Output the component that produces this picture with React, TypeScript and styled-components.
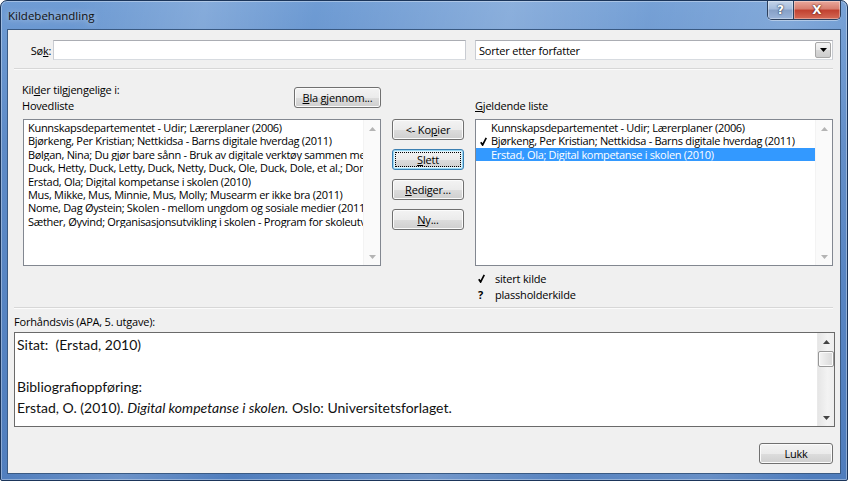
import React from "react";
import styled, { createGlobalStyle, css } from "styled-components";

const GlobalStyle = createGlobalStyle`
  html, body {
    margin: 0;
    padding: 0;
    background: #ffffff;
  }
  body {
    font-family: "Open Sans", "Noto Sans", sans-serif;
    font-size: 11px;
    color: #000000;
  }
`;

const mainSources = [
  "Kunnskapsdepartementet - Udir; Lærerplaner (2006)",
  "Bjørkeng, Per Kristian; Nettkidsa - Barns digitale hverdag (2011)",
  "Bølgan, Nina; Du gjør bare sånn - Bruk av digitale verktøy sammen med elever (2011)",
  "Duck, Hetty, Duck, Letty, Duck, Netty, Duck, Ole, Duck, Dole, et al.; Donald (2011)",
  "Erstad, Ola; Digital kompetanse i skolen (2010)",
  "Mus, Mikke, Mus, Minnie, Mus, Molly; Musearm er ikke bra (2011)",
  "Nome, Dag Øystein; Skolen - mellom ungdom og sosiale medier (2011)",
  "Sæther, Øyvind; Organisasjonsutvikling i skolen - Program for skoleutvikling (2009)",
];

const currentSources = [
  { text: "Kunnskapsdepartementet - Udir; Lærerplaner (2006)", cited: false, selected: false },
  { text: "Bjørkeng, Per Kristian; Nettkidsa - Barns digitale hverdag (2011)", cited: true, selected: false },
  { text: "Erstad, Ola; Digital kompetanse i skolen (2010)", cited: false, selected: true },
];

const Check = () => (
  <svg width="7" height="9" viewBox="0 0 7 9">
    <path d="M0.8 5.2 L2.6 8 L6.3 0.8" fill="none" stroke="#000" strokeWidth="1.7" />
  </svg>
);

const ArrowGlyph: React.FC<{ dir: "up" | "down"; color?: string }> = ({ dir, color = "#444" }) => (
  <svg width="7" height="4" viewBox="0 0 7 4">
    <polygon points={dir === "up" ? "0,4 3.5,0 7,4" : "0,0 7,0 3.5,4"} fill={color} />
  </svg>
);

const App: React.FC = () => {
  return (
    <>
      <GlobalStyle />
      <Window>
        <TitleBar>
          <TitleText>Kildebehandling</TitleText>
          <CaptionButtons>
            <CaptionButton kind="help">?</CaptionButton>
            <CaptionButton kind="close">X</CaptionButton>
          </CaptionButtons>
        </TitleBar>

        <Client>
          <SearchRow>
            <FieldLabel>
              Sø<Acc>k</Acc>:
            </FieldLabel>
            <TextInput />
            <Select>
              <span>Sorter etter forfatter</span>
              <DropButton>
                <ArrowGlyph dir="down" color="#000" />
              </DropButton>
            </Select>
          </SearchRow>

          <Separator />

          <SourcesGrid>
            <HeaderLeft>
              <HeaderText>
                <div>
                  Kil<Acc>d</Acc>er tilgjengelige i:
                </div>
                <div>Hovedliste</div>
              </HeaderText>
              <Button width={87} offset={5}>
                <span>
                  <Acc>B</Acc>la gjennom...
                </span>
              </Button>
            </HeaderLeft>
            <div />
            <HeaderRight>
              <Acc>G</Acc>jeldende liste
            </HeaderRight>

            <ListBox>
              <ListItems>
                {mainSources.map((s) => (
                  <ListItem key={s}>{s}</ListItem>
                ))}
              </ListItems>
              <ScrollBar>
                <ScrollArrow>
                  <ArrowGlyph dir="up" color="#b4b4b4" />
                </ScrollArrow>
                <ScrollArrow>
                  <ArrowGlyph dir="down" color="#b4b4b4" />
                </ScrollArrow>
              </ScrollBar>
            </ListBox>

            <ActionColumn>
              <Button width={72}>
                <span>
                  &lt;- Ko<Acc>p</Acc>ier
                </span>
              </Button>
              <Button width={72} focused>
                <FocusRect>
                  <span>
                    <Acc>S</Acc>lett
                  </span>
                </FocusRect>
              </Button>
              <Button width={72}>
                <span>
                  <Acc>R</Acc>ediger...
                </span>
              </Button>
              <Button width={72}>
                <span>
                  <Acc>N</Acc>y...
                </span>
              </Button>
            </ActionColumn>

            <ListBox>
              <ListItems>
                {currentSources.map((s) => (
                  <ListItem key={s.text} selected={s.selected} withMark>
                    <MarkSlot>{s.cited && <Check />}</MarkSlot>
                    <span>{s.text}</span>
                  </ListItem>
                ))}
              </ListItems>
              <ScrollBar>
                <ScrollArrow>
                  <ArrowGlyph dir="up" color="#b4b4b4" />
                </ScrollArrow>
                <ScrollArrow>
                  <ArrowGlyph dir="down" color="#b4b4b4" />
                </ScrollArrow>
              </ScrollBar>
            </ListBox>

            <div />
            <div />
            <Legend>
              <LegendRow>
                <LegendMark>
                  <Check />
                </LegendMark>
                <span>sitert kilde</span>
              </LegendRow>
              <LegendRow>
                <LegendMark>?</LegendMark>
                <span>plassholderkilde</span>
              </LegendRow>
            </Legend>
          </SourcesGrid>

          <Separator gap={5} />

          <PreviewLabel>Forhåndsvis (APA, 5. utgave):</PreviewLabel>
          <PreviewBox>
            <PreviewText>
              <PreviewLine>Sitat:&nbsp; (Erstad, 2010)</PreviewLine>
              <PreviewLine>&nbsp;</PreviewLine>
              <PreviewLine>Bibliografioppføring:</PreviewLine>
              <PreviewLine>
                Erstad, O. (2010). <em>Digital kompetanse i skolen.</em> Oslo: Universitetsforlaget.
              </PreviewLine>
            </PreviewText>
            <ScrollBar active>
              <ScrollArrow>
                <ArrowGlyph dir="up" />
              </ScrollArrow>
              <Thumb />
              <Spacer />
              <ScrollArrow>
                <ArrowGlyph dir="down" />
              </ScrollArrow>
            </ScrollBar>
          </PreviewBox>

          <Footer>
            <Button width={74}>
              <span>Lukk</span>
            </Button>
          </Footer>
        </Client>
      </Window>
    </>
  );
};

const Window = styled.div`
  width: 848px;
  height: 481px;
  box-sizing: border-box;
  display: flex;
  flex-direction: column;
  padding: 0 6px 6px 6px;
  border: 1px solid #1b355a;
  border-radius: 7px 7px 2px 2px;
  box-shadow: inset 0 0 0 1px rgba(255, 255, 255, 0.35);
  background:
    linear-gradient(
      100deg,
      rgba(255, 255, 255, 0) 8%,
      rgba(255, 255, 255, 0.16) 22%,
      rgba(255, 255, 255, 0) 34%,
      rgba(255, 255, 255, 0.2) 55%,
      rgba(255, 255, 255, 0.05) 70%,
      rgba(255, 255, 255, 0.14) 85%,
      rgba(255, 255, 255, 0) 96%
    ),
    linear-gradient(180deg, #6f9cd4 0%, #5e8bc7 30%, #4f7dbd 100%);
  overflow: hidden;
`;

const TitleBar = styled.div`
  height: 28px;
  display: flex;
  justify-content: space-between;
  align-items: flex-start;
  flex-shrink: 0;
`;

const TitleText = styled.div`
  padding: 7px 0 0 1px;
  font-size: 11.5px;
  line-height: 15px;
  color: #111111;
  text-shadow: 0 0 6px rgba(255, 255, 255, 0.7);
`;

const CaptionButtons = styled.div`
  display: flex;
  height: 18px;
  border: 1px solid #2c3f5c;
  border-top: none;
  border-radius: 0 0 5px 5px;
  overflow: hidden;
  box-shadow: 0 1px 0 rgba(255, 255, 255, 0.4);
`;

const CaptionButton = styled.div<{ kind: "help" | "close" }>`
  height: 18px;
  display: flex;
  align-items: center;
  justify-content: center;
  font-family: "DejaVu Sans", sans-serif;
  font-weight: bold;
  font-size: 12px;
  color: #ffffff;
  text-shadow: 0 0 2px #22334d, 0 0 1px #22334d;
  box-shadow: inset 0 0 0 1px rgba(255, 255, 255, 0.35);
  ${(p) =>
    p.kind === "help"
      ? css`
          width: 25px;
          border-right: 1px solid #2c3f5c;
          background: linear-gradient(#c3d3e8 0%, #a5bcdc 45%, #869fc6 50%, #9bb5da 100%);
        `
      : css`
          width: 46px;
          background: linear-gradient(#eaa89c 0%, #d77d6e 45%, #c1402f 50%, #d56a56 100%);
          text-shadow: 0 0 2px #5a1a12, 0 0 1px #5a1a12;
        `}
`;

const Client = styled.div`
  flex: 1;
  display: flex;
  flex-direction: column;
  padding: 0 5px 0 6px;
  background: #f0f0f0;
  border: 1px solid #3a5a83;
`;

const SearchRow = styled.div`
  display: grid;
  grid-template-columns: 39px 413px 367px;
  align-items: center;
  margin-top: 10px;
  height: 20px;
`;

const FieldLabel = styled.label`
  text-align: right;
  padding-right: 2px;
  white-space: nowrap;
  letter-spacing: -0.3px;
`;

const Acc = styled.span`
  text-decoration: underline;
`;

const TextInput = styled.div`
  height: 20px;
  box-sizing: border-box;
  background: #ffffff;
  border: 1px solid #abadb3;
  border-color: #abadb3 #c9ccd2 #d7dbe0 #c9ccd2;
`;

const Select = styled.div`
  height: 20px;
  margin-left: 9px;
  box-sizing: border-box;
  display: flex;
  align-items: center;
  justify-content: space-between;
  padding: 0 1px 0 3px;
  background: #ffffff;
  border: 1px solid #abadb3;
  border-color: #abadb3 #c9ccd2 #d7dbe0 #c9ccd2;
  letter-spacing: -0.2px;
`;

const DropButton = styled.div`
  width: 16px;
  height: 16px;
  box-sizing: border-box;
  display: flex;
  align-items: center;
  justify-content: center;
  border: 1px solid #a7a7a7;
  border-radius: 2px;
  background: linear-gradient(#f4f4f4 0%, #e8e8e8 50%, #d8d8d8 51%, #cdcdcd 100%);
`;

const Separator = styled.div<{ gap?: number }>`
  height: 1px;
  margin: ${(p) => p.gap ?? 8}px 2px 0 0;
  background: #d7d7d7;
  border-bottom: 1px solid #fbfbfb;
`;

const SourcesGrid = styled.div`
  display: grid;
  grid-template-columns: 358px 72px 358px;
  grid-template-rows: 32px 147px auto;
  column-gap: 11px;
  row-gap: 5px;
  margin-top: 12px;
  padding-left: 9px;
`;

const HeaderLeft = styled.div`
  display: flex;
  justify-content: space-between;
  align-items: flex-start;
`;

const HeaderText = styled.div`
  margin-left: -1px;
  line-height: 16px;
  letter-spacing: -0.2px;
`;

const HeaderRight = styled.div`
  align-self: end;
  line-height: 16px;
  letter-spacing: -0.2px;
`;

const ListBox = styled.div`
  display: flex;
  background: #ffffff;
  border: 1px solid #828790;
  overflow: hidden;
`;

const ListItems = styled.div`
  flex: 1;
  min-width: 0;
  padding-top: 1px;
`;

const ListItem = styled.div<{ selected?: boolean; withMark?: boolean }>`
  display: flex;
  align-items: center;
  height: 13.4px;
  line-height: 13.4px;
  padding-left: ${(p) => (p.withMark ? "0" : "4px")};
  white-space: nowrap;
  overflow: hidden;
  letter-spacing: -0.3px;
  ${(p) =>
    p.selected &&
    css`
      background: #3399ff;
      color: #ffffff;
    `}
`;

const MarkSlot = styled.span`
  width: 15px;
  flex-shrink: 0;
  padding-left: 4px;
  box-sizing: border-box;
  display: flex;
  align-items: center;
`;

const ScrollBar = styled.div<{ active?: boolean }>`
  width: 17px;
  flex-shrink: 0;
  display: flex;
  flex-direction: column;
  justify-content: space-between;
  background: ${(p) =>
    p.active ? "linear-gradient(90deg, #e6e6e6 0%, #f3f3f3 60%, #eeeeee 100%)" : "#fafafa"};
  border-left: 1px solid ${(p) => (p.active ? "#e9e9e9" : "#f3f3f3")};
  box-sizing: border-box;
`;

const ScrollArrow = styled.div`
  height: 17px;
  display: flex;
  align-items: center;
  justify-content: center;
`;

const Thumb = styled.div`
  height: 16px;
  margin: 1px 0 0 0;
  box-sizing: border-box;
  border: 1px solid #979797;
  border-radius: 2px;
  background: linear-gradient(90deg, #f4f4f4 0%, #e6e6e6 50%, #d9d9d9 100%);
  box-shadow: inset 0 0 0 1px #fbfbfb;
`;

const Spacer = styled.div`
  flex: 1;
`;

const ActionColumn = styled.div`
  display: flex;
  flex-direction: column;
  gap: 9px;
`;

const Button = styled.div<{ width: number; focused?: boolean; offset?: number }>`
  width: ${(p) => p.width}px;
  height: 21px;
  margin-top: ${(p) => p.offset ?? 0}px;
  box-sizing: border-box;
  display: flex;
  align-items: center;
  justify-content: center;
  flex-shrink: 0;
  border: 1px solid #707070;
  border-radius: 3px;
  background: linear-gradient(#f3f3f3 0%, #ebebeb 50%, #dddddd 51%, #cfcfcf 100%);
  box-shadow: inset 0 0 0 1px #fbfbfb;
  letter-spacing: -0.2px;
  white-space: nowrap;
  ${(p) =>
    p.focused &&
    css`
      border-color: #3c7fb1;
      box-shadow: inset 0 0 0 1px #98d8f4, inset 0 0 0 2px #e3f4fc;
    `}
`;

const FocusRect = styled.span`
  display: flex;
  align-items: center;
  justify-content: center;
  width: 64px;
  height: 13px;
  outline: 1px dotted #000000;
`;

const Legend = styled.div`
  margin-top: -1px;
  padding-left: 3px;
`;

const LegendRow = styled.div`
  display: flex;
  align-items: center;
  height: 16px;
  letter-spacing: -0.2px;
`;

const LegendMark = styled.span`
  width: 17px;
  display: flex;
  align-items: center;
  font-weight: bold;
  font-size: 11px;
`;

const PreviewLabel = styled.div`
  margin-top: 5px;
  line-height: 16px;
  letter-spacing: -0.2px;
`;

const PreviewBox = styled.div`
  display: flex;
  height: 95px;
  margin-top: 2px;
  box-sizing: border-box;
  background: #ffffff;
  border: 1px solid #6a6a6a;
`;

const PreviewText = styled.div`
  flex: 1;
  padding: 1px 0 0 2px;
  font-family: "Lato", "Open Sans", sans-serif;
  font-size: 14px;
  color: #111111;
`;

const PreviewLine = styled.div`
  line-height: 21px;
  white-space: nowrap;
`;

const Footer = styled.div`
  display: flex;
  justify-content: flex-end;
  margin-top: 16px;
  padding-right: 2px;
`;

export default App;
